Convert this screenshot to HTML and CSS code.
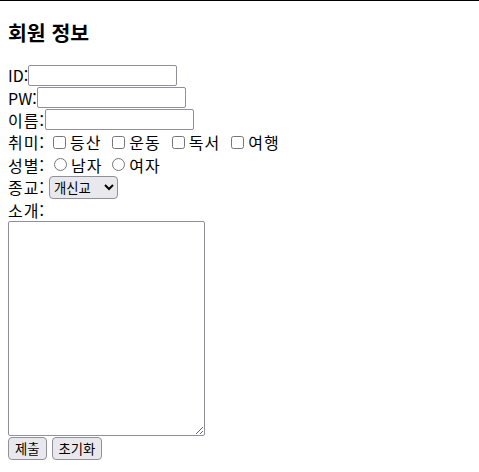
FILE: index.html
```html
<!DOCTYPE html>
<html lang="ko">
<head>
    <meta charset="UTF-8">
    <meta name="viewport" content="width=device-width, initial-scale=1.0">
    <title>회원 정보</title>
    <link rel="stylesheet" href="styles.css">
</head>
<body>
    <h3 class="title">회원 정보</h3>
    <form action="" class="join-form">
        <div class="row">
            <label for="userid" class="latin">ID:</label><input type="text" id="userid" name="userid" class="text-field">
        </div>
        <div class="row">
            <label for="userpw" class="latin">PW:</label><input type="password" id="userpw" name="userpw" class="text-field">
        </div>
        <div class="row">
            <label for="username">이름:</label><input type="text" id="username" name="username" class="text-field">
        </div>
        <div class="row">
            <span>취미:</span>
            <input type="checkbox" id="h1" name="hobby" value="등산"><label for="h1">등산</label>
            <input type="checkbox" id="h2" name="hobby" value="운동"><label for="h2">운동</label>
            <input type="checkbox" id="h3" name="hobby" value="독서"><label for="h3">독서</label>
            <input type="checkbox" id="h4" name="hobby" value="여행"><label for="h4">여행</label>
        </div>
        <div class="row">
            <span>성별:</span>
            <input type="radio" id="g1" name="gender" value="남자"><label for="g1">남자</label>
            <input type="radio" id="g2" name="gender" value="여자"><label for="g2">여자</label>
        </div>
        <div class="row">
            <label for="religion">종교:</label>
            <select id="religion" name="religion" class="select-field">
                <option>개신교</option>
                <option>천주교</option>
                <option>불교</option>
                <option>무교</option>
            </select>
        </div>
        <div class="row">
            <label for="intro">소개:</label>
        </div>
        <textarea id="intro" name="intro" class="intro"></textarea>
        <div class="buttons">
            <button type="submit" class="btn">제출</button>
            <button type="reset" class="btn">초기화</button>
        </div>
    </form>
</body>
</html>
```

FILE: styles.css
```css
html{
    border-top: 1px solid #000;
}
body{
    margin: 0 8px;
    font-family: "Noto Sans CJK KR", "Noto Sans", sans-serif;
    font-size: 16px;
    color: #000;
}
.title{
    margin: 18px 0 0;
    font-size: 20.5px;
    line-height: 27px;
}
.join-form{
    margin-top: 18px;
}
.row{
    display: flex;
    align-items: center;
    height: 22.4px;
    line-height: 22px;
    letter-spacing: 1px;
    white-space: nowrap;
}
.latin{
    letter-spacing: 0;
}
.text-field{
    box-sizing: border-box;
    width: 149px;
    height: 21px;
    margin: 0;
    padding: 1px 2px;
    border: 1px solid #8f8f9d;
    border-radius: 2px;
    font-size: 13.33px;
}
input[type="checkbox"]{
    width: 13px;
    height: 13px;
    margin: 0 4px 0 8px;
}
input[type="checkbox"] + label{
    margin-right: 3px;
}
input[type="radio"]{
    width: 13px;
    height: 13px;
    margin: 0 4px 0 9px;
}
input[type="radio"] + label{
    margin-right: 1px;
}
.select-field{
    box-sizing: border-box;
    height: 23px;
    width: 69px;
    margin-left: 4px;
    font-family: inherit;
    font-size: 13.33px;
    letter-spacing: 0;
    color: #000;
    border: 1px solid #8f8f9d;
    border-radius: 4px;
    background: #e9e9ed;
}
.intro{
    display: block;
    box-sizing: border-box;
    width: 197px;
    height: 215px;
    margin: 0;
    border: 1px solid #8f8f9d;
    border-radius: 2px;
}
.buttons{
    display: flex;
    gap: 5px;
    margin-top: 1px;
}
.btn{
    box-sizing: border-box;
    height: 23px;
    padding: 0 6px;
    font-family: inherit;
    font-size: 13.33px;
    color: #000;
    background: #e9e9ed;
    border: 1px solid #8f8f9d;
    border-radius: 4px;
}
```
